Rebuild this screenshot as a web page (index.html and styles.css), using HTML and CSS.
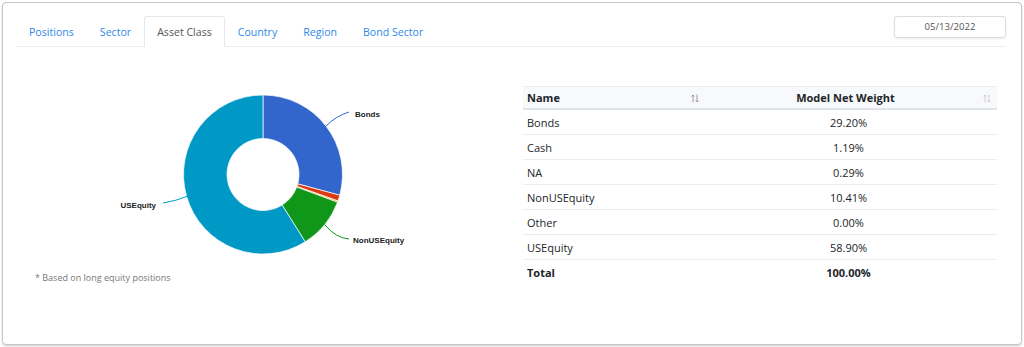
FILE: index.html
```html
<!DOCTYPE html>
<html lang="en">
<head>
  <meta charset="UTF-8">
  <meta name="viewport" content="width=device-width, initial-scale=1.0">
  <title>Asset Class</title>
  <link rel="stylesheet" href="styles.css">
</head>
<body>
  <div class="card">
    <div class="top">
      <ul class="tabs">
        <li class="tab">Positions</li>
        <li class="tab">Sector</li>
        <li class="tab active">Asset Class</li>
        <li class="tab">Country</li>
        <li class="tab">Region</li>
        <li class="tab">Bond Sector</li>
      </ul>
      <div class="date">05/13/2022</div>
    </div>

    <div class="content">
      <div class="chart-col">
        <svg class="donut" width="494" height="200" viewBox="0 0 494 200">
          <g stroke="#fff" stroke-width="0.7">
            <path fill="#3366cc" d="M247,25 A79.5,79.5 0 0 1 323.75,125.24 L281.75,113.89 A36,36 0 0 0 247,68.5 Z"/>
            <path fill="#dc3912" d="M323.75,125.24 A79.5,79.5 0 0 1 321.99,130.91 L280.96,116.46 A36,36 0 0 0 281.75,113.89 Z"/>
            <path fill="#ff9900" d="M321.99,130.91 A79.5,79.5 0 0 1 321.49,132.28 L280.73,117.08 A36,36 0 0 0 280.96,116.46 Z"/>
            <path fill="#109618" d="M321.49,132.28 A79.5,79.5 0 0 1 289.23,171.86 L266.12,135 A36,36 0 0 0 280.73,117.08 Z"/>
            <path fill="#0099c6" d="M289.23,171.86 A79.5,79.5 0 1 1 247,25 L247,68.5 A36,36 0 1 0 266.12,135 Z"/>
          </g>
          <g fill="none" stroke-width="1">
            <path stroke="#3366cc" d="M310,56 Q320,46 333,42"/>
            <path stroke="#109618" d="M309,155 Q320,168 333,169"/>
            <path stroke="#0099c6" d="M172,126 Q160,131 147,133"/>
          </g>
          <g class="labels">
            <text x="339" y="47">Bonds</text>
            <text x="337" y="173">NonUSEquity</text>
            <text x="140" y="138" text-anchor="end">USEquity</text>
          </g>
        </svg>
        <p class="note">* Based on long equity positions</p>
      </div>

      <div class="table-col">
        <table class="weights">
          <thead>
            <tr>
              <th class="name-col">Name
                <svg class="sort" width="8" height="9" viewBox="0 0 8 9"><path d="M2,8.5V1M0.6,2.6L2,1L3.4,2.6M6,0.5V8M4.6,6.4L6,8L7.4,6.4"/></svg>
              </th>
              <th class="value-col">Model Net Weight
                <svg class="sort faint" width="8" height="9" viewBox="0 0 8 9"><path d="M2,8.5V1M0.6,2.6L2,1L3.4,2.6M6,0.5V8M4.6,6.4L6,8L7.4,6.4"/></svg>
              </th>
            </tr>
          </thead>
          <tbody>
            <tr><td>Bonds</td><td class="num">29.20%</td></tr>
            <tr><td>Cash</td><td class="num">1.19%</td></tr>
            <tr><td>NA</td><td class="num">0.29%</td></tr>
            <tr><td>NonUSEquity</td><td class="num">10.41%</td></tr>
            <tr><td>Other</td><td class="num">0.00%</td></tr>
            <tr><td>USEquity</td><td class="num">58.90%</td></tr>
            <tr class="total"><td>Total</td><td class="num">100.00%</td></tr>
          </tbody>
        </table>
      </div>
    </div>
  </div>
</body>
</html>
```

FILE: styles.css
```css
body {
  margin: 0;
  font-family: "Open Sans", "Noto Sans", sans-serif;
  font-size: 11px;
  color: #212529;
  background: #fff;
}
.card {
  margin: 2px;
  height: 343px;
  box-sizing: border-box;
  border: 1px solid #c6c6c6;
  border-radius: 4px;
  box-shadow: 0 1px 2px rgba(0,0,0,0.2);
  padding: 13px 15px 0 13px;
}
.top {
  display: flex;
  justify-content: space-between;
  align-items: flex-start;
  border-bottom: 1px solid #eeeeee;
  height: 30px;
}
.tabs {
  display: flex;
  list-style: none;
  margin: 0;
  padding: 0;
}
.tab {
  padding: 0 12px;
  height: 30px;
  line-height: 30px;
  box-sizing: border-box;
  border: 1px solid transparent;
  border-bottom: none;
  border-radius: 3px 3px 0 0;
  font-size: 10.6px;
  color: #2f89ea;
}
.tab.active {
  height: 31px;
  border-color: #e8e8e8;
  background: #fff;
  color: #555;
}
.date {
  width: 112px;
  height: 22px;
  box-sizing: border-box;
  border: 1px solid #dcdcdc;
  border-radius: 3px;
  box-shadow: 0 1px 2px rgba(0,0,0,0.08);
  text-align: center;
  line-height: 20px;
  font-size: 9.6px;
  color: #555;
}
.content {
  display: flex;
}
.chart-col {
  width: 494px;
  padding-top: 23px;
}
.donut {
  display: block;
}
.labels text {
  font-family: "Liberation Sans", Arial, sans-serif;
  font-size: 8px;
  font-weight: bold;
  fill: #222;
  stroke: #fff;
  stroke-width: 1.6px;
  paint-order: stroke;
}
.note {
  margin: 2px 0 0 19px;
  font-size: 9px;
  line-height: 12px;
  color: #777;
}
.table-col {
  margin-left: 13px;
  padding-top: 39px;
}
.weights {
  width: 474px;
  border-collapse: collapse;
}
.weights th {
  position: relative;
  height: 21px;
  padding: 0 4px;
  background: #f8f9fa;
  border-top: 1px solid #eceef0;
  border-bottom: 2px solid #e1e4e8;
  font-weight: bold;
  text-align: left;
}
.weights th.name-col {
  width: 169px;
}
.weights th.value-col {
  text-align: center;
  padding-right: 10px;
}
.sort {
  position: absolute;
  right: 6px;
  top: 7px;
  fill: none;
  stroke: #888;
  stroke-width: 0.8;
}
.name-col .sort {
  right: 1px;
}
.sort.faint {
  stroke: #c4c4c4;
}
.weights td {
  height: 24px;
  padding: 0 4px;
  border-bottom: 1px solid #e9ecef;
}
.weights td.num {
  text-align: center;
}
.weights tr.total td {
  border-bottom: none;
  font-weight: bold;
}
```
